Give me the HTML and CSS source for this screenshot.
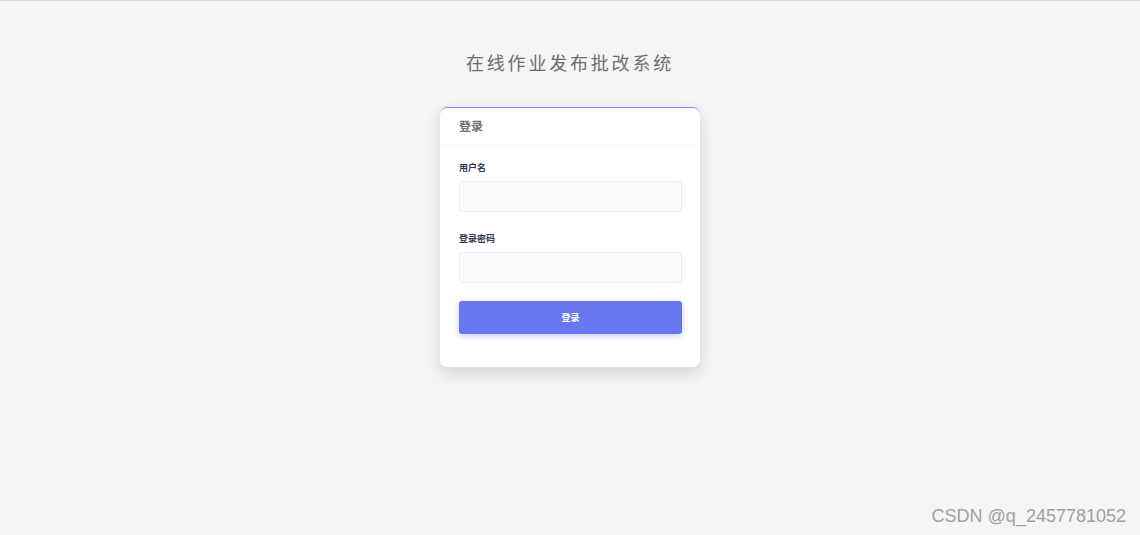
FILE: index.html
```html
<!DOCTYPE html>
<html lang="zh-CN">
  <head>
    <meta charset="UTF-8" />
    <meta name="viewport" content="width=device-width, initial-scale=1.0" />
    <title>在线作业发布批改系统</title>
    <link rel="stylesheet" href="styles.css">
  </head>
  <body>
    <div class="topline"></div>
    <h1 class="title">在线作业发布批改系统</h1>
    <div class="card">
      <div class="card-header">登录</div>
      <form class="card-body">
        <div class="field">
          <label for="username">用户名</label>
          <input type="text" id="username" />
        </div>
        <div class="field">
          <label for="password">登录密码</label>
          <input type="password" id="password" />
        </div>
        <button type="submit">登录</button>
      </form>
    </div>
    <div class="mark">CSDN @q_2457781052</div>
  </body>
</html>
```

FILE: styles.css
```css
html, body {
  height: 100%;
}
body {
  margin: 0;
  background: #f5f5f5;
  font-family: "Noto Sans CJK SC", "Noto Sans", sans-serif;
  position: relative;
}
.topline {
  height: 1px;
  background: #dcdcdc;
}
.title {
  margin: 46px 0 0;
  text-align: center;
  font-size: 18px;
  font-weight: 400;
  letter-spacing: 2.8px;
  color: #6a6e72;
  line-height: 30px;
}
.card {
  width: 260px;
  margin: 30px auto 0;
  background: #fff;
  border-radius: 7px;
  border-top: 1px solid #8990ee;
  box-shadow: 0 6px 16px rgba(0, 0, 0, 0.14);
  box-sizing: border-box;
  height: 260px;
}
.card-header {
  padding: 9px 19px 0;
  height: 28px;
  font-size: 12px;
  font-weight: 700;
  color: #6b7079;
  border-bottom: 1px solid #f7f7f9;
}
.card-body {
  padding: 16px 18px 0 19px;
}
.field + .field {
  margin-top: 21px;
}
label {
  display: block;
  font-size: 9px;
  font-weight: 700;
  color: #323a4e;
  line-height: 12px;
}
input {
  display: block;
  box-sizing: border-box;
  width: 223px;
  height: 31px;
  margin: 7px 0 0;
  background: #fbfbfe;
  border: 1px solid #ecebfa;
  border-radius: 3px;
  outline: none;
}
button {
  display: block;
  width: 223px;
  height: 33px;
  margin-top: 18px;
  background: #6777ef;
  color: #fff;
  border: none;
  border-radius: 3px;
  font-family: inherit;
  font-size: 9px;
  font-weight: 700;
  box-shadow: 0 2px 6px #c9cdfa;
  cursor: pointer;
}
.mark {
  position: absolute;
  right: 14px;
  bottom: 8px;
  font-family: "Liberation Sans", Arial, sans-serif;
  font-size: 18px;
  color: #a0a0a0;
}
```
